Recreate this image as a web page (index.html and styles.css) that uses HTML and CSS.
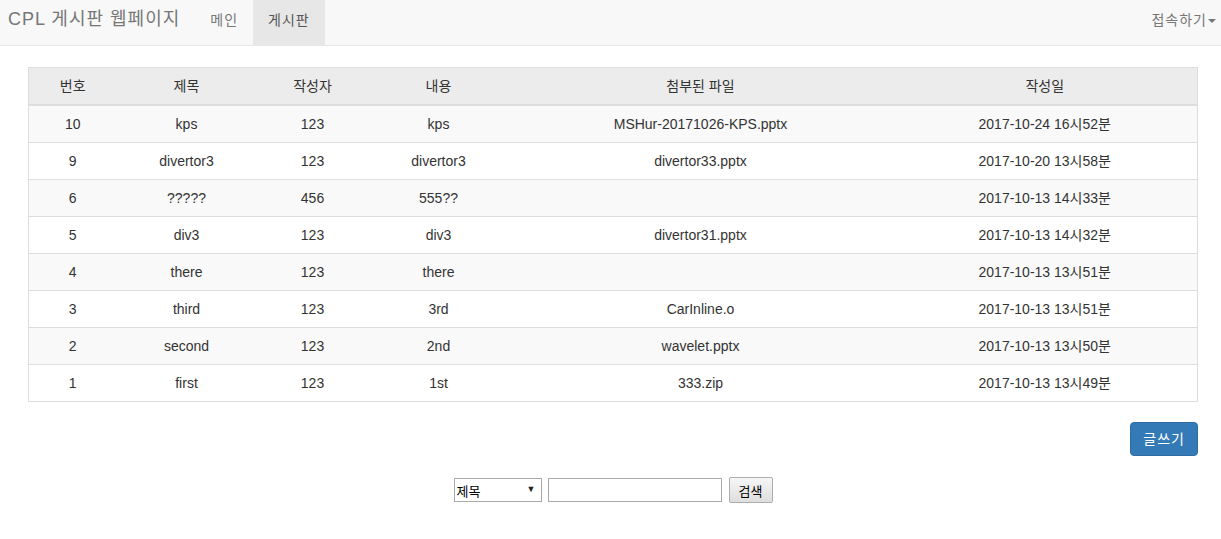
FILE: index.html
```html
<!DOCTYPE html>
<html lang="ko">
<head>
    <meta charset="UTF-8">
    <title>CPL 게시판 웹페이지</title>
    <link rel="stylesheet" href="styles.css">
</head>
<body>
    <nav class="navbar">
        <a class="brand" href="#">CPL 게시판 웹페이지</a>
        <ul class="nav">
            <li><a href="#">메인</a></li>
            <li class="active"><a href="#">게시판</a></li>
        </ul>
        <ul class="nav navRight">
            <li><a href="#">접속하기<span class="caret"></span></a></li>
        </ul>
    </nav>

    <div class="mainDiv">
        <table class="board">
            <colgroup>
                <col style="width: 88px">
                <col style="width: 140px">
                <col style="width: 112px">
                <col style="width: 140px">
                <col style="width: 384px">
                <col>
            </colgroup>
            <thead>
                <tr>
                    <th>번호</th>
                    <th>제목</th>
                    <th>작성자</th>
                    <th>내용</th>
                    <th>첨부된 파일</th>
                    <th>작성일</th>
                </tr>
            </thead>
            <tbody>
                <tr><td>10</td><td>kps</td><td>123</td><td>kps</td><td>MSHur-20171026-KPS.pptx</td><td>2017-10-24 16시52분</td></tr>
                <tr><td>9</td><td>divertor3</td><td>123</td><td>divertor3</td><td>divertor33.pptx</td><td>2017-10-20 13시58분</td></tr>
                <tr><td>6</td><td>?????</td><td>456</td><td>555??</td><td></td><td>2017-10-13 14시33분</td></tr>
                <tr><td>5</td><td>div3</td><td>123</td><td>div3</td><td>divertor31.pptx</td><td>2017-10-13 14시32분</td></tr>
                <tr><td>4</td><td>there</td><td>123</td><td>there</td><td></td><td>2017-10-13 13시51분</td></tr>
                <tr><td>3</td><td>third</td><td>123</td><td>3rd</td><td>CarInline.o</td><td>2017-10-13 13시51분</td></tr>
                <tr><td>2</td><td>second</td><td>123</td><td>2nd</td><td>wavelet.pptx</td><td>2017-10-13 13시50분</td></tr>
                <tr><td>1</td><td>first</td><td>123</td><td>1st</td><td>333.zip</td><td>2017-10-13 13시49분</td></tr>
            </tbody>
        </table>

        <div class="writeRow">
            <a class="btnPrimary" href="#">글쓰기</a>
        </div>

        <form class="searchForm">
            <span class="selectWrap">
                <select class="searchSelect">
                    <option>제목</option>
                    <option>내용</option>
                    <option>작성자</option>
                </select>
            </span>
            <input type="text" class="searchInput">
            <button type="button" class="searchBtn">검색</button>
        </form>
    </div>
</body>
</html>
```

FILE: styles.css
```css
body {
    margin: 0;
    font-family: "Liberation Sans", "Noto Sans CJK KR", Arial, sans-serif;
    font-size: 14px;
    line-height: 20px;
    color: #333;
    background-color: #fff;
}

a {
    text-decoration: none;
}

.navbar {
    display: flex;
    align-items: stretch;
    height: 45px;
    background-color: #f8f8f8;
    border-bottom: 1px solid #e7e7e7;
}

.brand {
    padding: 9px 15px 0 8px;
    font-size: 18px;
    line-height: 20px;
    letter-spacing: 1px;
    color: #777;
}

.nav {
    display: flex;
    margin: 0;
    padding: 0;
    list-style: none;
}

.nav li a {
    display: block;
    height: 45px;
    box-sizing: border-box;
    padding: 10px 15px 0;
    letter-spacing: 1px;
    color: #777;
}

.nav li.active a {
    background-color: #e7e7e7;
    color: #555;
}

.navRight {
    margin-left: auto;
}

.navRight li a {
    padding-right: 5px;
}

.caret {
    display: inline-block;
    width: 0;
    height: 0;
    margin-left: 1px;
    vertical-align: middle;
    border-top: 4px solid #777;
    border-left: 4px solid transparent;
    border-right: 4px solid transparent;
}

.mainDiv {
    padding: 21px 23px 0 28px;
}

.board {
    width: 1170px;
    border-collapse: collapse;
    border: 1px solid #ddd;
    table-layout: fixed;
}

.board th,
.board td {
    padding: 8px;
    line-height: 20px;
    text-align: center;
    font-weight: normal;
    border-top: 1px solid #ddd;
    white-space: nowrap;
}

.board thead th {
    background-color: #ececec;
    border-bottom: 2px solid #ddd;
}

.board tbody tr:nth-child(odd) {
    background-color: #f9f9f9;
}

.writeRow {
    display: flex;
    justify-content: flex-end;
    width: 1170px;
    margin-top: 20px;
}

.btnPrimary {
    display: inline-block;
    padding: 6px 12px;
    line-height: 20px;
    letter-spacing: 1px;
    color: #fff;
    background-color: #337ab7;
    border: 1px solid #2e6da4;
    border-radius: 4px;
}

.searchForm {
    display: flex;
    align-items: center;
    justify-content: center;
    width: 1170px;
    margin-top: 21px;
    gap: 6px;
}

.selectWrap {
    position: relative;
    display: inline-block;
}

.selectWrap::after {
    content: "▼";
    position: absolute;
    right: 6px;
    top: 5px;
    font-size: 9px;
    line-height: 12px;
    color: #222;
    pointer-events: none;
}

.searchSelect {
    display: block;
    width: 88px;
    height: 24px;
    padding: 0 2px;
    font-family: "Noto Sans CJK KR", sans-serif;
    font-size: 13px;
    border: 1px solid #a9a9a9;
    background-color: #fff;
    color: #000;
    border-radius: 0;
    appearance: none;
    -webkit-appearance: none;
}

.searchInput {
    width: 170px;
    height: 20px;
    padding: 1px;
    border: 1px solid #a9a9a9;
}

.searchBtn {
    width: 44px;
    height: 26px;
    margin-left: 1px;
    font-family: "Noto Sans CJK KR", sans-serif;
    font-size: 13px;
    color: #000;
    background: linear-gradient(#f6f6f6, #dedede);
    border: 1px solid #adadad;
    border-radius: 2px;
    padding: 0;
}
```
